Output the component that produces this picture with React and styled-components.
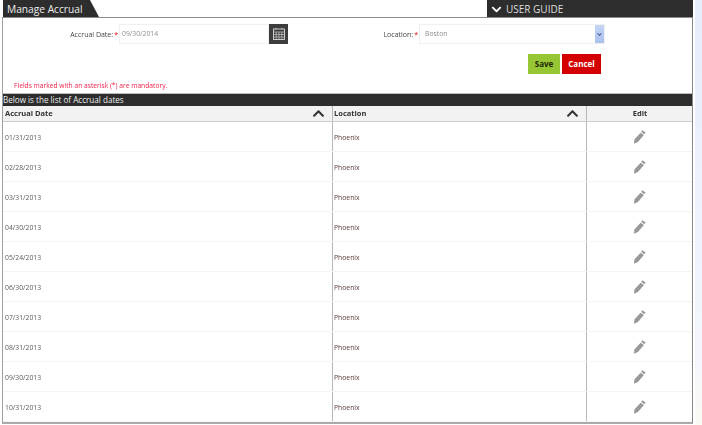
import React from 'react';
import styled, { createGlobalStyle } from 'styled-components';
import { FaChevronUp, FaChevronDown } from 'react-icons/fa';

const Global = createGlobalStyle`
  html, body { margin: 0; padding: 0; background: #fff; }
  body { font-family: "Open Sans", "Liberation Sans", sans-serif; overflow: hidden; }
`;

const Page = styled.div`
  width: 702px; height: 425px; box-sizing: border-box; padding-left: 2px; overflow: hidden;
  display: flex; justify-content: space-between;
`;
const Frame = styled.div`
  width: 691px; height: 424px; box-sizing: border-box; display: flex; flex-direction: column;
`;
const SideStrip = styled.div`
  width: 7px; background: linear-gradient(#e6edfb, #f3f6fc 85%, #fbfbf4);
`;
const TitleBar = styled.div`
  height: 18px; box-sizing: border-box; display: flex; justify-content: space-between; border-bottom: 1px solid #8c8c8c;
`;
const TitleTab = styled.div`
  width: 96px; height: 17px; margin-left: 1px; background: #2d2d2d; color: #eee; font-size: 10.2px; line-height: 17px;
  padding: 1px 0 0 4px; box-sizing: border-box; clip-path: polygon(0 0, 87px 0, 100% 100%, 0 100%);
`;
const GuideTab = styled.div`
  width: 206px; height: 17px; background: #2d2d2d; color: #ddd; font-size: 10px; line-height: 17px;
  display: flex; align-items: center; gap: 4px; padding: 1px 0 0 4px; box-sizing: border-box;
`;
const Body = styled.div`
  flex: 1; display: flex; flex-direction: column; min-height: 0;
  border-left: 1px solid #a0a0a0; border-right: 1px solid #888; border-bottom: 2px solid #aaa;
`;
const FormRow = styled.div`
  height: 20px; margin-top: 6px; display: flex; align-items: center;
`;
const Label = styled.label`
  width: ${p => p.$w}px; text-align: right; font-size: 7px; color: #444; padding-right: 1px; box-sizing: border-box; flex: none;
  will-change: opacity;
`;
const Star = styled.span`color: #e00; margin-left: 1px;`;
const Field = styled.div`
  width: ${p => p.$w}px; height: 20px; box-sizing: border-box; border: 1px solid #f0f0f0;
  font-size: 6.8px; color: #8e8e8e; line-height: 18px; padding-left: ${p => p.$pad}px; display: flex; justify-content: space-between; flex: none;
  will-change: opacity;
`;
const CalButton = styled.div`
  width: 19px; height: 20px; background: #3d3d3d; display: flex; align-items: center; justify-content: center; flex: none;
`;
const SelectArrow = styled.div`
  width: 9px; height: 18px; background: linear-gradient(#c5d5f5, #a9c0ee); display: flex; align-items: center; justify-content: center; color: #223a70;
`;
const Buttons = styled.div`
  display: flex; justify-content: flex-end; gap: 2px; padding-right: 91px; margin-top: 10px;
`;
const Button = styled.div`
  height: 20px; line-height: 20px; width: ${p => p.$w}px; text-align: center; font-size: 8px; font-weight: 700;
  background: ${p => p.$bg}; color: ${p => p.$fg};
`;
const Note = styled.div`
  font-size: 6.7px; color: #f2234b; padding-left: 11px; margin-top: 7px; height: 10px; line-height: 10px;
  will-change: opacity;
`;
const ListBar = styled.div`
  margin-top: 2px; height: 12px; line-height: 12px; background: #2d2d2d; color: #eee; font-size: 8.1px;
  border-top: 1px solid #bbb; box-sizing: content-box;
`;
const Row = styled.div`
  display: grid; grid-template-columns: 329px 254px 1fr; height: ${p => p.$h}px;
  background: ${p => p.$head ? '#f3f2f2' : '#fff'};
  border-bottom: 1px solid ${p => p.$head ? '#ccc' : '#f4f4f4'}; box-sizing: border-box;
`;
const Cell = styled.div`
  display: flex; align-items: center; justify-content: ${p => p.$center ? 'center' : 'flex-start'};
  padding: 1px 1px 0; box-sizing: border-box; font-size: 6.8px; color: ${p => p.$color || '#5a5a5a'};
  will-change: opacity;
  &:first-child { padding-left: 2px; }
  & + & { border-left: 1px solid #b8b8b8; }
`;
const HeadCell = styled(Cell)`
  font-size: 7.5px; font-weight: 700; color: #333; justify-content: ${p => p.$center ? 'center' : 'space-between'};
  padding-top: 0; padding-bottom: 1px; padding-right: ${p => p.$center ? 0 : 7}px;
`;

const rows = ['01/31/2013','02/28/2013','03/31/2013','04/30/2013','05/24/2013','06/30/2013','07/31/2013','08/31/2013','09/30/2013','10/31/2013'];

const CalendarIcon = () => (
  <svg width="14" height="14" viewBox="0 0 14 14" fill="none" stroke="#ccc" strokeWidth="1">
    <rect x="1.5" y="2" width="11" height="10.5" />
    <path d="M1.5 5h11M1.5 7.5h11M1.5 10h11M4.2 5v7.5M7 5v7.5M9.8 5v7.5M4 .8v2M10 .8v2" strokeWidth=".7" />
  </svg>
);

const PencilIcon = () => (
  <svg width="13" height="14" viewBox="0 0 13 14" fill="#989898">
    <path d="M9.4 .3 12.6 2.5 11.4 4.2 8.2 2Z" />
    <path d="M7.6 2.7 10.9 5 4.9 12 1 13.8 1.4 9.6Z" />
  </svg>
);

export default function App() {
  return (
    <Page>
      <Global />
      <Frame>
        <TitleBar>
          <TitleTab>Manage Accrual</TitleTab>
          <GuideTab><FaChevronDown size={11} color="#fff" />USER GUIDE</GuideTab>
        </TitleBar>
        <Body>
          <FormRow>
            <Label $w={116}>Accrual Date:<Star>*</Star></Label>
            <Field $w={150} $pad={2}>09/30/2014</Field>
            <CalButton><CalendarIcon /></CalButton>
            <Label $w={131}>Location:<Star>*</Star></Label>
            <Field $w={186} $pad={5}>Boston<SelectArrow><FaChevronDown size={5} /></SelectArrow></Field>
          </FormRow>
          <Buttons>
            <Button $w={32} $bg="#96c634" $fg="#1e2a00">Save</Button>
            <Button $w={39} $bg="#d40000" $fg="#fff">Cancel</Button>
          </Buttons>
          <Note>Fields marked with an asterisk (*) are mandatory.</Note>
          <ListBar>Below is the list of Accrual dates</ListBar>
          <Row $head $h={16}>
            <HeadCell>Accrual Date<FaChevronUp size={13} /></HeadCell>
            <HeadCell>Location<FaChevronUp size={13} /></HeadCell>
            <HeadCell $center>Edit</HeadCell>
          </Row>
          {rows.map(d => (
            <Row key={d} $h={30}>
              <Cell>{d}</Cell>
              <Cell $color="#5a3a3a">Phoenix</Cell>
              <Cell $center><PencilIcon /></Cell>
            </Row>
          ))}
        </Body>
      </Frame>
      <SideStrip />
    </Page>
  );
}
